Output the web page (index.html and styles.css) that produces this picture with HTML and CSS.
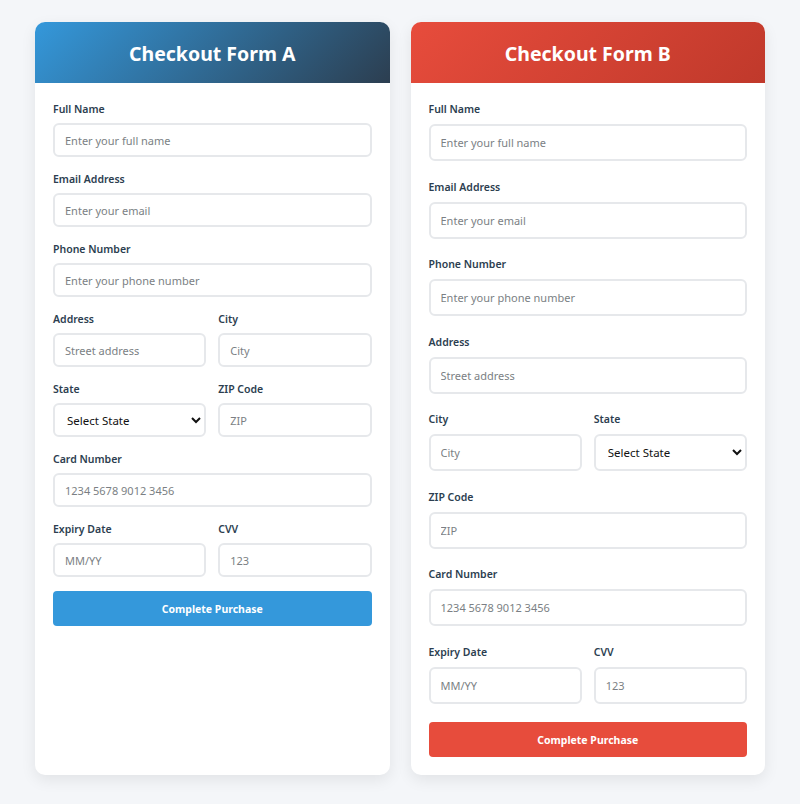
FILE: index.html
```html
<!DOCTYPE html>
<html lang="en">
<head>
    <meta charset="UTF-8">
    <meta name="viewport" content="width=device-width, initial-scale=1.0">
    <title>Checkout Forms</title>
    <link rel="stylesheet" href="styles.css">
</head>
<body>
    <div class="page">
        <div class="card card-a">
            <div class="card-header">
                <h2>Checkout Form A</h2>
            </div>
            <form class="card-body">
                <div class="field">
                    <label>Full Name</label>
                    <input type="text" placeholder="Enter your full name">
                </div>
                <div class="field">
                    <label>Email Address</label>
                    <input type="email" placeholder="Enter your email">
                </div>
                <div class="field">
                    <label>Phone Number</label>
                    <input type="tel" placeholder="Enter your phone number">
                </div>
                <div class="row">
                    <div class="field">
                        <label>Address</label>
                        <input type="text" placeholder="Street address">
                    </div>
                    <div class="field">
                        <label>City</label>
                        <input type="text" placeholder="City">
                    </div>
                </div>
                <div class="row">
                    <div class="field">
                        <label>State</label>
                        <select>
                            <option>Select State</option>
                        </select>
                    </div>
                    <div class="field">
                        <label>ZIP Code</label>
                        <input type="text" placeholder="ZIP">
                    </div>
                </div>
                <div class="field">
                    <label>Card Number</label>
                    <input type="text" placeholder="1234 5678 9012 3456">
                </div>
                <div class="row">
                    <div class="field">
                        <label>Expiry Date</label>
                        <input type="text" placeholder="MM/YY">
                    </div>
                    <div class="field">
                        <label>CVV</label>
                        <input type="text" placeholder="123">
                    </div>
                </div>
                <button type="button">Complete Purchase</button>
            </form>
        </div>

        <div class="card card-b">
            <div class="card-header">
                <h2>Checkout Form B</h2>
            </div>
            <form class="card-body">
                <div class="field">
                    <label>Full Name</label>
                    <input type="text" placeholder="Enter your full name">
                </div>
                <div class="field">
                    <label>Email Address</label>
                    <input type="email" placeholder="Enter your email">
                </div>
                <div class="field">
                    <label>Phone Number</label>
                    <input type="tel" placeholder="Enter your phone number">
                </div>
                <div class="field">
                    <label>Address</label>
                    <input type="text" placeholder="Street address">
                </div>
                <div class="row">
                    <div class="field">
                        <label>City</label>
                        <input type="text" placeholder="City">
                    </div>
                    <div class="field">
                        <label>State</label>
                        <select>
                            <option>Select State</option>
                        </select>
                    </div>
                </div>
                <div class="field">
                    <label>ZIP Code</label>
                    <input type="text" placeholder="ZIP">
                </div>
                <div class="field">
                    <label>Card Number</label>
                    <input type="text" placeholder="1234 5678 9012 3456">
                </div>
                <div class="row">
                    <div class="field">
                        <label>Expiry Date</label>
                        <input type="text" placeholder="MM/YY">
                    </div>
                    <div class="field">
                        <label>CVV</label>
                        <input type="text" placeholder="123">
                    </div>
                </div>
                <button type="button">Complete Purchase</button>
            </form>
        </div>
    </div>
</body>
</html>
```

FILE: styles.css
```css
body {
    margin: 0;
    background-color: #f4f6f9;
    font-family: "Noto Sans", "Open Sans", sans-serif;
    color: #2c3e50;
}

.page {
    display: grid;
    grid-template-columns: 1fr 1fr;
    gap: 21px;
    padding: 22px 35px 29px;
}

.card {
    background-color: white;
    border-radius: 10px;
    overflow: hidden;
    box-shadow: 0 5px 15px rgba(0, 0, 0, 0.08);
}

.card-header {
    height: 61px;
    display: flex;
    align-items: center;
    justify-content: center;
    color: white;
}

.card-header h2 {
    margin: 2px 0 0;
    font-size: 19.5px;
    font-weight: 700;
}

.card-a .card-header {
    background: linear-gradient(135deg, #3498db, #2c3e50);
}

.card-b .card-header {
    background: linear-gradient(135deg, #e74c3c, #c0392b);
}

.card-body {
    padding: 18px;
}

.row {
    display: grid;
    grid-template-columns: 1fr 1fr;
    gap: 12px;
}

label {
    display: block;
    padding-top: 1px;
    font-size: 10.5px;
    font-weight: 600;
    line-height: 15px;
}

input,
select {
    display: block;
    width: 100%;
    box-sizing: border-box;
    border: 2px solid #e6e8eb;
    border-radius: 6px;
    padding: 0 10px;
    font-family: inherit;
    font-size: 11px;
    color: #2c3e50;
    background-color: white;
}

select {
    padding-left: 8px;
    font-size: 11.5px;
    color: #111;
}

input::placeholder {
    color: #7b7f84;
}

button {
    display: block;
    width: 100%;
    height: 35px;
    border: none;
    border-radius: 4px;
    color: white;
    font-family: inherit;
    font-size: 10.5px;
    font-weight: 700;
    cursor: pointer;
}

/* Form A: tighter spacing */
.card-a label {
    margin-bottom: 6px;
}

.card-a input,
.card-a select {
    height: 34px;
}

.card-a .field {
    margin-bottom: 14px;
}

.card-a button {
    background-color: #3498db;
}

/* Form B: roomier spacing */
.card-b label {
    margin-bottom: 7px;
}

.card-b input,
.card-b select {
    height: 37px;
}

.card-b .field {
    margin-bottom: 17.5px;
}

.card-b button {
    margin-top: 1px;
    background-color: #e74c3c;
}
```
